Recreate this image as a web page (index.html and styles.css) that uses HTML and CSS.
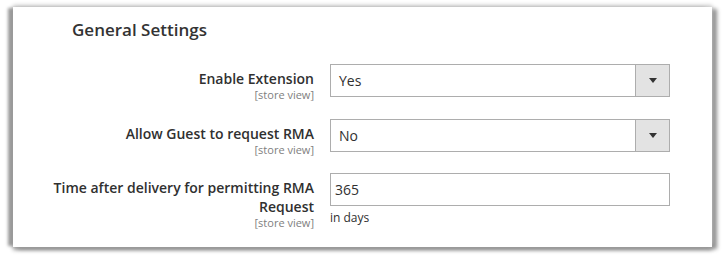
FILE: index.html
```html
<!DOCTYPE html>
<html>
<head>
<meta charset="utf-8">
<link rel="stylesheet" href="styles.css">
</head>
<body>
<div class="frame">
  <div class="panel">
    <h2 class="title">General Settings</h2>
    <div class="rows">
      <div class="row first">
        <div class="label">
          <span class="name">Enable Extension</span>
          <span class="scope">[store view]</span>
        </div>
        <div class="control">
          <div class="select">
            <span class="value">Yes</span>
            <span class="btn"><svg width="8" height="5" viewBox="0 0 8 5"><path d="M0 0H8L4 5Z" fill="#333"/></svg></span>
          </div>
        </div>
      </div>
      <div class="row">
        <div class="label">
          <span class="name">Allow Guest to request RMA</span>
          <span class="scope">[store view]</span>
        </div>
        <div class="control">
          <div class="select">
            <span class="value">No</span>
            <span class="btn"><svg width="8" height="5" viewBox="0 0 8 5"><path d="M0 0H8L4 5Z" fill="#333"/></svg></span>
          </div>
        </div>
      </div>
      <div class="row">
        <div class="label">
          <span class="name">Time after delivery for permitting RMA Request</span>
          <span class="scope">[store view]</span>
        </div>
        <div class="control">
          <div class="input"><span class="text">365</span></div>
          <div class="note">in days</div>
        </div>
      </div>
    </div>
  </div>
</div>
</body>
</html>
```
FILE: styles.css
```css
html, body {
  margin: 0;
  padding: 0;
  background: #ffffff;
}
body {
  font-family: "Open Sans", "Liberation Sans", sans-serif;
  color: #303030;
}
.frame {
  padding: 7px 13px 8px 13px;
}
.panel {
  width: 699px;
  height: 240px;
  box-sizing: border-box;
  background: #fff;
  box-shadow: -6px 0 3px -1px #9a9a9a, 0 -2px 4px #cccccc, 5px 2px 4px #8f8f8f, 0 3px 4px #9a9a9a;
  padding-top: 12px;
}
.title {
  margin: 0 0 0 59px;
  font-size: 17px;
  font-weight: 600;
  line-height: 22px;
  color: #333;
}
.rows {
  margin-top: 23px;
  display: flex;
  flex-direction: column;
  gap: 17px;
}
.row {
  display: grid;
  grid-template-columns: 301px 340px;
  column-gap: 16px;
}
.row.first {
  margin-bottom: 1px;
}
.label {
  display: flex;
  flex-direction: column;
  align-items: flex-end;
  text-align: right;
  padding-top: 5px;
}
.name {
  font-size: 14px;
  font-weight: 600;
  line-height: 19px;
  color: #303030;
  padding-left: 40px;
}
.scope {
  font-size: 11px;
  line-height: 13px;
  color: #808080;
}
.select {
  height: 33px;
  box-sizing: border-box;
  border: 1px solid #adadad;
  display: flex;
  align-items: stretch;
  background: #fff;
}
.value {
  flex: 1;
  font-size: 14px;
  line-height: 31px;
  padding-left: 8px;
  color: #303030;
}
.btn {
  width: 33px;
  background: #e3e3e3;
  border-left: 1px solid #adadad;
  display: flex;
  align-items: center;
  justify-content: center;
}
.input {
  height: 33px;
  box-sizing: border-box;
  border: 1px solid #adadad;
  display: flex;
}
.text {
  font-size: 14px;
  line-height: 31px;
  padding-left: 4px;
  color: #303030;
}
.note {
  font-size: 12px;
  line-height: 16px;
  margin-top: 4px;
  color: #303030;
}
```
